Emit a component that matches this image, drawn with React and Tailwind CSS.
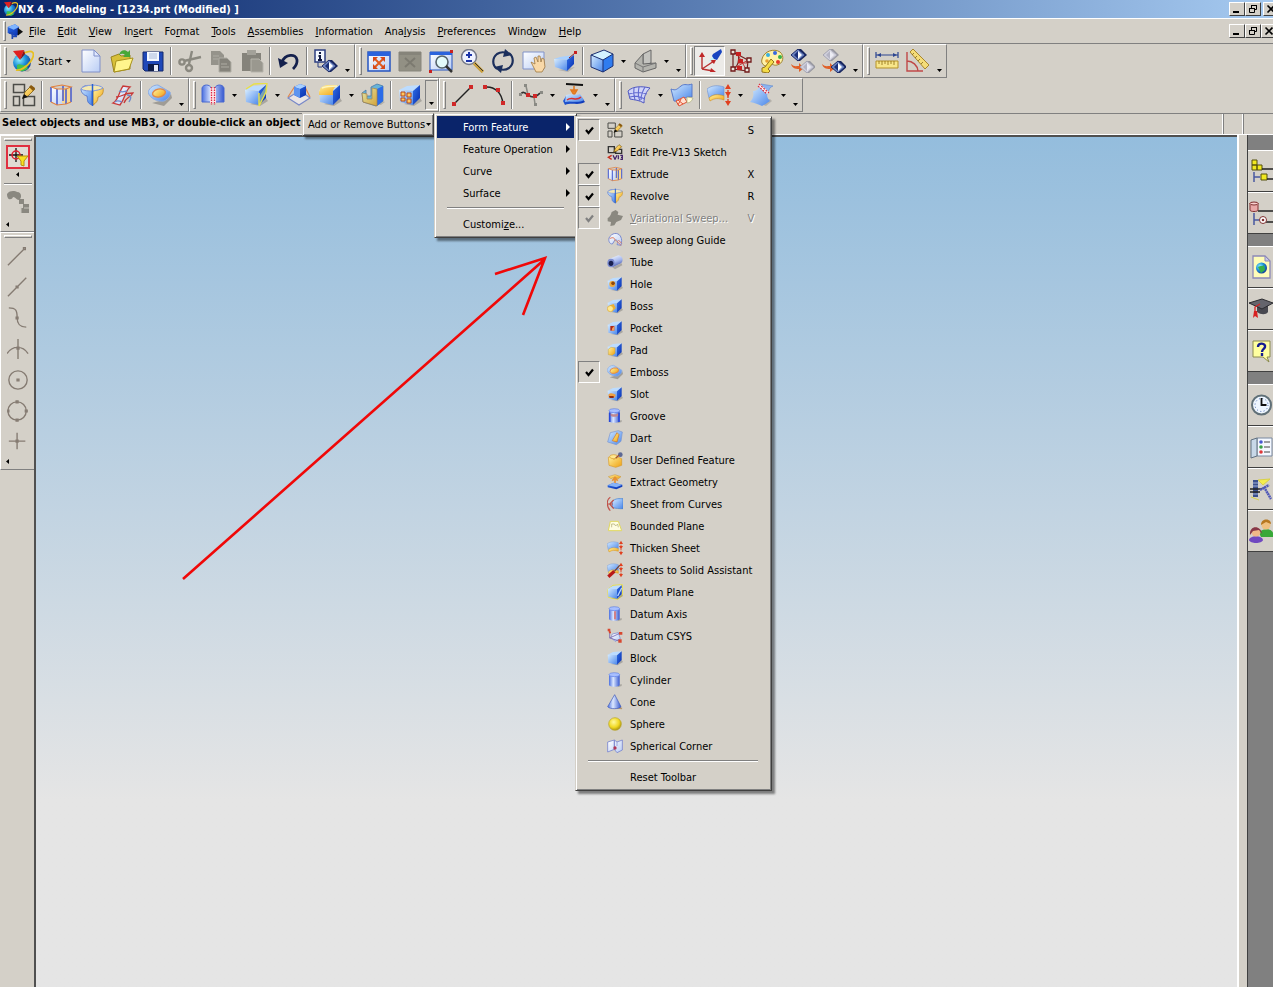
import clsx from "clsx";

const BLUE = "url(#blue)";
const DEEP = "url(#deep)";
const GOLD = "url(#gold)";
const PALE = "url(#pale)";

const Gradients = () => (
  <svg className="absolute size-0" aria-hidden="true">
    <defs>
      <linearGradient id="blue" x1="0" y1="0" x2="1" y2="1">
        <stop offset="0" stopColor="#d6ecff" />
        <stop offset="1" stopColor="#4a86ea" />
      </linearGradient>
      <linearGradient id="deep" x1="0" y1="0" x2="1" y2="1">
        <stop offset="0" stopColor="#2f6fe8" />
        <stop offset="1" stopColor="#0a2fae" />
      </linearGradient>
      <linearGradient id="gold" x1="0" y1="0" x2="1" y2="1">
        <stop offset="0" stopColor="#fff3a0" />
        <stop offset="1" stopColor="#f0a010" />
      </linearGradient>
      <linearGradient id="pale" x1="0" y1="0" x2="1" y2="1">
        <stop offset="0" stopColor="#ffffff" />
        <stop offset="1" stopColor="#b9cdf5" />
      </linearGradient>
      <linearGradient id="tube" x1="0" y1="0" x2="1" y2="0">
        <stop offset="0" stopColor="#4a6fe0" />
        <stop offset="0.4" stopColor="#dce8ff" />
        <stop offset="1" stopColor="#3558d0" />
      </linearGradient>
      <linearGradient id="pipe" x1="0.3" y1="0" x2="0.7" y2="1">
        <stop offset="0" stopColor="#eef4ff" />
        <stop offset="0.5" stopColor="#a4b6ee" />
        <stop offset="1" stopColor="#34459c" />
      </linearGradient>
      <radialGradient id="ball" cx="0.4" cy="0.35" r="0.7">
        <stop offset="0" stopColor="#fff9a0" />
        <stop offset="0.6" stopColor="#f0d820" />
        <stop offset="1" stopColor="#a08a10" />
      </radialGradient>
      <radialGradient id="globe" cx="0.35" cy="0.35" r="0.75">
        <stop offset="0" stopColor="#8ff0ff" />
        <stop offset="0.5" stopColor="#1c8fd8" />
        <stop offset="1" stopColor="#12308c" />
      </radialGradient>
      <pattern id="dither" width="2" height="2" patternUnits="userSpaceOnUse">
        <path d="M0 0h1v1H0zM1 1h1v1H1z" fill="#fff" />
      </pattern>
    </defs>
  </svg>
);

const CubeShape = ({ front = BLUE }) => (
  <>
    <path d="M6 21l10 2 8-5-2-3z" fill="#000" opacity=".2" />
    <path d="M1 7l8-4 13-1-7 6z" fill="#bcdcff" />
    <path d="M1 7l14 1v14L2 19z" fill={front} />
    <path d="M15 8l7-6v13l-7 7z" fill={DEEP} />
  </>
);

const CylinderShape = () => (
  <>
    <path d="M16 20l6-2v3l-6 2z" fill="#000" opacity=".2" />
    <path d="M3 4v15c0 4 16 4 16 0V4z" fill="url(#tube)" />
    <ellipse cx="11" cy="4" rx="8" ry="3" fill="#a8bfff" stroke="#4a6fe0" strokeWidth=".8" />
  </>
);

const SketchShape = () => (
  <>
    <g fill="none" stroke="#4c4c48" strokeWidth="1.500">
      <path d="M1.500 1.500h11v8h-11zM1.500 13.500h6v9h-6zM11.500 13.500h11v9h-11z" />
    </g>
    <path d="M11 15l2-6 6-6 4 3-7 7z" fill={GOLD} stroke="#7a5a10" strokeWidth=".8" />
    <path d="M10 16l2-5 4 3z" fill="#111" />
    <path d="M17 4l2-2 4 3-2 3z" fill="#8a5a10" />
  </>
);

const DiamondShape = ({ x, y, dark }) => (
  <g transform={`translate(${x} ${y})`}>
    <path d="M7 0h3l6 6-7 6H6z" fill={dark ? "#14235c" : "#96969e"} />
    <path d="M0 6l7-6 7 6-7 6z" fill={dark ? "#7088c4" : "#d0d0dc"} stroke={dark ? "#1c2a66" : "#a4a4b2"} />
    <path d="M7 2v8L3 6z" fill={dark ? "#1c3078" : "#b4b4c4"} />
    <path d="M7 2v8l4-4z" fill={dark ? "#fff" : "#ececf4"} />
  </g>
);

const RedArrow = () => <path d="M0 15c3 3 5 2 8 2v-3l5 5-5 4v-3c-4 0-7-1-8-5z" fill="#e06028" />;

const RulerShape = () => (
  <>
    <path d="M1 3v6M23 3v6M1 6h22" stroke="#2c4590" strokeWidth="1.200" />
    <path d="M2 6l4-2v4zM22 6l-4-2v4z" fill="#2c4590" />
    <path d="M1 12h22v7H1z" fill="#f8e68a" stroke="#b59228" />
    <path d="M4 12v3M7 12v4M10 12v3M13 12v4M16 12v3M19 12v4" stroke="#8a6a10" strokeWidth=".8" />
  </>
);

const ThickenShape = () => (
  <>
    <path d="M0 6c5-4 11-4 17-2v9C11 11 6 11 2 15z" fill={BLUE} stroke="#6c8fd0" strokeWidth=".6" />
    <path d="M2 15c4-4 9-4 15-2v4c-6-2-9-2-14 1z" fill={GOLD} stroke="#d09020" strokeWidth=".6" />
    <path d="M21 4v16" stroke="#e05030" strokeDasharray="2 1" strokeWidth="1.500" />
    <path d="M18 6l3-5 3 5zM18 18l3 5 3-5z" fill="#e04020" />
    <path d="M18 9h6l-3 5z" fill="#e04020" />
  </>
);

const LoftShape = () => (
  <>
    <path d="M8 20l8 3 6-5-2-2z" fill="#000" opacity=".15" />
    <path d="M3 8c3 0 6-2 6-5l9 7c-2 3 0 6 2 8-3 2-6 4-8 5-4-2-7-3-12-4 3-3 4-7 3-11z" fill={BLUE} />
    <path d="M11 1l12 2c-3 1-4 3-5 7z" fill="#8cb4f0" stroke="#5c88d0" strokeWidth=".6" />
    <path d="M9 2l9 8" stroke="#fff" strokeWidth="3" />
    <path d="M9 1l10 9M8 3l9 8" stroke="#d83040" strokeWidth="1.200" strokeDasharray="2 1" />
  </>
);

const icons = {
  nx: (
    <>
      <path d="M8 21l10 2 4-3z" fill="#000" opacity=".15" />
      <circle cx="12" cy="13.500" r="9" fill="url(#globe)" />
      <path d="M7 16c3-2 5 1 8 0l3 3c-3 4-8 4-11 1z" fill="#3fc050" />
      <path d="M14 4c9-4 12 0 7 8-4 6-11 10-15 9" fill="none" stroke="#e8c020" strokeWidth="1.800" />
      <path d="M3 2l11-1-4 10z" fill="#e02020" />
      <path d="M10 11l4-10 1 4z" fill="#8c1010" />
    </>
  ),
  part: (
    <>
      <path d="M1 6l11-4 6 4v11l-5 3-12-5z" fill={DEEP} />
      <path d="M1 6l11-4 6 4-8 4z" fill="#7fb4ff" />
      <path d="M16 7l8 6-8 6z" fill="#111" />
      <path d="M8 15v9M3 15h6M8 20h7" stroke="#2048b0" strokeWidth="2.500" />
    </>
  ),
  newFile: (
    <>
      <path d="M3 1h12l6 6v16H3z" fill={PALE} stroke="#8090c8" />
      <path d="M15 1v6h6z" fill="#dfe8ff" stroke="#8090c8" />
    </>
  ),
  open: (
    <>
      <path d="M1 8l8-3 2 2 9-1v14L4 23z" fill="#d8c038" stroke="#9a8420" />
      <path d="M6 12l17-3-4 11L4 23z" fill="#fff48c" stroke="#a8921c" />
      <path d="M9 6c1-5 6-6 9-3l2-2v7h-7l2-2c-2-2-4-1-6 0z" fill="#48a838" />
    </>
  ),
  save: (
    <>
      <path d="M2 3h20v19H4l-2-2z" fill="#1f48b8" stroke="#14286c" />
      <path d="M6 3h12v9H6z" fill="#f4f8ff" />
      <path d="M8 5h8M8 7h8M8 9h8" stroke="#a8b8d8" />
      <path d="M7 15h11v7H7z" fill="#0f1c48" />
      <path d="M13 16h4v6h-4z" fill="#e8ecf8" />
    </>
  ),
  cut: (
    <g fill="none" stroke="#8b8980" strokeWidth="2.400">
      <path d="M11 15L14 2M6 12l17-4" />
      <circle cx="4" cy="13" r="2.600" />
      <circle cx="11" cy="19" r="3" />
    </g>
  ),
  copy: (
    <>
      <path d="M2 2h9l4 4v10H2z" fill="#95938b" />
      <path d="M10 9h8l4 4v10H10z" fill="#85837b" stroke="#b0aea6" />
      <path d="M4 7h6M4 10h5M12 15h6M12 18h8" stroke="#aeaca4" />
    </>
  ),
  paste: (
    <>
      <path d="M2 4h19v18H2z" fill="#85837b" />
      <path d="M7 1h9v5H7z" fill="#a3a199" />
      <path d="M11 10h8l4 4v9H11z" fill="#9a988f" stroke="#b5b3ab" />
    </>
  ),
  undo: (
    <>
      <path d="M5 13C8 5 19 4 20 11c.5 4-2 7-4 9" fill="none" stroke="#14204c" strokeWidth="2.800" />
      <path d="M1 9l2 10 8-5z" fill="#14204c" />
    </>
  ),
  info: (
    <>
      <path d="M1 1h10v12H1z" fill="#f4f8ff" stroke="#2c3e80" strokeWidth="1.500" />
      <path d="M6 3v2M6 6v5M4 11h4M4.500 7H6" stroke="#101840" strokeWidth="2" />
      <DiamondShape x="8" y="11" dark />
      <path d="M4 13v5h4" fill="none" stroke="#2c3e80" />
    </>
  ),
  fit: (
    <>
      <path d="M1 3h22v19H1z" fill={PALE} stroke="#2654c0" strokeWidth="1.500" />
      <path d="M1 3h22v4H1z" fill="#2b63dc" />
      <path d="M8 10l8 8M16 10l-8 8" stroke="#e05a20" strokeWidth="2" />
      <path d="M6 8h5l-5 5zM18 8h-5l5 5zM6 20v-5l5 5zM18 20v-5l-5 5z" fill="#d84818" />
    </>
  ),
  fitOff: (
    <>
      <path d="M1 3h22v19H1z" fill="#929084" stroke="#88867c" />
      <path d="M1 3h22v3H1z" fill="#86847a" />
      <path d="M7 9l10 9M17 9L7 18" stroke="#7c7a70" strokeWidth="2" />
    </>
  ),
  zoomBox: (
    <>
      <path d="M1 3h22v18H1z" fill={PALE} stroke="#2654c0" />
      <path d="M1 3h22v3H1z" fill="#2b63dc" />
      <circle cx="13" cy="13" r="6" fill="#e4fbfb" stroke="#56646c" strokeWidth="1.600" />
      <path d="M17 17l6 6" stroke="#333" strokeWidth="2.500" />
      <path d="M0 21h3v3H0zM21 1h3v3h-3z" fill="#c82020" />
    </>
  ),
  zoomInOut: (
    <>
      <circle cx="9" cy="8" r="7.500" fill="#eef2ff" stroke="#747888" strokeWidth="1.500" />
      <path d="M9 3v6M6 6h6M6 12h6" stroke="#1c34a8" strokeWidth="2" />
      <path d="M14 14l9 9" stroke="#c9a040" strokeWidth="3.500" />
      <path d="M15 14l8 8" stroke="#333" />
    </>
  ),
  rotate: (
    <>
      <path d="M6 20C1 16 1 9 6 5c3-2 7-2 10-1M18 4c5 4 5 11 0 15-3 2-7 2-10 1" fill="none" stroke="#1c2f5c" strokeWidth="2.200" />
      <path d="M14 0l7 6-9 2zM10 24l-7-6 9-2z" fill="#1c2f5c" />
    </>
  ),
  pan: (
    <>
      <path d="M1 3h21v17H1z" fill={PALE} stroke="#8092c8" />
      <path d="M9 13l4 2-1-6 2-1 2 5v-6h2l1 6 1-4 2 1 1 8-3 5h-6z" fill="#f8d8a8" stroke="#a07840" strokeWidth=".8" />
    </>
  ),
  perspective: (
    <>
      <path d="M5 21l10 2 7-5z" fill="#000" opacity=".15" />
      <path d="M1 10l6-2 14-2-5 5z" fill="#a8d0ff" />
      <path d="M1 10l13 1v11L2 18z" fill={BLUE} />
      <path d="M14 11l7-5v9l-7 7z" fill={DEEP} />
      <path d="M16 9l6-5" stroke="#902020" />
      <path d="M21 2h3v3h-3z" fill="#c82020" />
    </>
  ),
  shaded: (
    <>
      <path d="M1 6l13-5 9 4-10 6z" fill="#d4f2ff" />
      <path d="M1 6l12 5v12L1 18z" fill={BLUE} />
      <path d="M13 11l10-6v12l-10 6z" fill="#2f7cf0" />
      <path d="M1 6l13-5 9 4v12l-10 6-12-5zM1 6l12 5 10-6M13 11v12" fill="none" stroke="#1c2f70" />
    </>
  ),
  wire: (
    <>
      <path d="M10 5l8-4v13l-8 2z" fill="#c4c4c0" stroke="#666" />
      <path d="M2 14l8-9v10l13-1v5l-13 4-8-4z" fill="#b4b4ae" stroke="#666" />
      <path d="M2 14l8 4v5M10 18l13-4" fill="none" stroke="#777" />
    </>
  ),
  wcs: (
    <>
      <path d="M4 6v14M4 20l12-8M4 20l11 2" stroke="#b83030" strokeWidth="1.400" />
      <path d="M4 3l3 5H1zM18 11l-6 0 4 4zM18 23l-5-4-1 4z" fill="#c02828" />
      <path d="M10 13l7-8 3 3z" fill="#c0f4ff" />
      <path d="M15 5l8-5 1 3-5 8-3-1-2-3z" fill="#1844c0" />
    </>
  ),
  wcsEdit: (
    <>
      <path d="M4 3v17l14 2M4 3l15 8-1 11M4 20C9 18 11 10 9 5" fill="none" stroke="#702020" strokeWidth="1.200" />
      <path d="M4 20l15-9M9 6l9 16M9 14h10" stroke="#c03030" strokeWidth=".9" />
      <g fill="#e8e4dc" stroke="#701818" strokeWidth="1.300">
        <path d="M2 1h4v4H2zM2 18h4v4H2zM18 9h4v4h-4zM16 19h4v4h-4z" />
      </g>
      <path d="M7 3h5v4H7zM9 10h5v4H9zM8 17h5v4H8z" fill="#c82020" />
    </>
  ),
  palette: (
    <>
      <path d="M2 10C4 2 14-1 20 3c5 4 3 12-3 13-4 1-4-2-7 0-3 3-10 0-8-6z" fill="#fff2a8" stroke="#a08430" />
      <circle cx="8" cy="6" r="2" fill="#38b0e0" />
      <circle cx="15" cy="4" r="2" fill="#3868e0" />
      <circle cx="20" cy="8" r="2" fill="#38b048" />
      <circle cx="18" cy="13" r="2" fill="#e83828" />
      <circle cx="7" cy="12" r="1.800" fill="#e8a030" />
      <path d="M2 19l3-1 6-8 3 3-6 7 2 2-2 2-6-1z" fill="#f4dc48" stroke="#94741c" />
    </>
  ),
  blankA: (
    <>
      <RedArrow />
      <DiamondShape x="0" y="0" dark />
      <DiamondShape x="9" y="12" />
    </>
  ),
  blankB: (
    <>
      <RedArrow />
      <DiamondShape x="1" y="0" />
      <DiamondShape x="9" y="12" dark />
    </>
  ),
  ruler: <RulerShape />,
  angle: (
    <>
      <path d="M1 3v19h16M1 12a11 11 0 0 1 11 10" fill="none" stroke="#c04848" strokeWidth="1.400" />
      <path d="M4 3l3-3 16 16-4 4z" fill="#f4dc78" stroke="#a8862c" />
      <path d="M8 4l-2 2M11 7L9 9M14 10l-2 2M17 13l-2 2" stroke="#80641c" strokeWidth=".8" />
    </>
  ),
  sketch: <SketchShape />,
  preSketch: (
    <>
      <path d="M2 4h9v9H2zM13 8h9v6h-9z" fill="none" stroke="#333" strokeWidth="2" />
      <path d="M10 12l3-6 5-5 4 3-6 6z" fill={GOLD} stroke="#7a5a10" />
      <path d="M7 17l-5 3 5 3" fill="none" stroke="#c83020" strokeWidth="2" />
      <path d="M9 17l3 6 3-6M17 17v6M20 17h3v3h-2 2v3h-3" fill="none" stroke="#402068" strokeWidth="1.800" />
    </>
  ),
  extrude: (
    <>
      <path d="M2 4l6 2v16l-6-3zM8 6h8v14l-8 2z" fill={PALE} />
      <path d="M13 5h9v15l-9 0z" fill="#f8d890" />
      <path d="M2 4v15M8 6v16M14 3v15M17 6v15M22 4v15" fill="none" stroke="#4c60d0" strokeWidth="1.600" />
      <path d="M2 4l11-2 9 2-5 2H8zM2 19l6 3 9-1 5-2" fill="none" stroke="#e08040" strokeWidth="1.200" />
    </>
  ),
  revolve: (
    <>
      <path d="M1 6c2-4 8-4 11-3v19c-6-2-4-6-5-9-4-1-6-4-6-7z" fill={BLUE} stroke="#4a6cc8" strokeWidth=".8" />
      <path d="M13 8c4-1 8-2 10-3 1 5-1 8-5 9 0 4-2 6-5 8z" fill={GOLD} stroke="#c08820" strokeWidth=".8" />
      <path d="M1 6c3-5 19-5 22-1-3 2-6 2-10 3-4 0-9 0-12-2z" fill="#f4e8b0" stroke="#8098e0" />
      <path d="M12.500 1v22" stroke="#2860d0" strokeWidth="1.500" />
    </>
  ),
  varSweep: (
    <g fill="none" strokeWidth="1.300">
      <path d="M2 20c6-3 6-12 10-17l7 1c-5 4-4 10-10 18z" fill={PALE} stroke="#c83838" />
      <path d="M5 14c7 0 7-4 17-4-3 5-7 4-9 10" stroke="#c83838" />
      <path d="M8 8c4 2 6 0 8 0M4 19c2-2 5-1 7 0" stroke="#7088c8" />
      <path d="M16 12c4 0 5 2 2 7" stroke="#7088c8" />
    </g>
  ),
  emboss: (
    <>
      <path d="M4 20l12 3 8-8-1-4-8 6z" fill="#000" opacity=".25" />
      <path d="M0 9c2-5 6-7 10-7l12 7c1 2-1 7-6 9-6 1-14-2-16-9z" fill={BLUE} stroke="#8cabe0" />
      <ellipse cx="11" cy="10" rx="6.500" ry="4" fill={GOLD} stroke="#e08848" strokeWidth="1.300" transform="rotate(-12 11 10)" />
    </>
  ),
  feature: (
    <>
      <path d="M1 19V5c1-4 8-4 9 0v14zM14 19V5c1-4 8-4 9 0v14z" fill="url(#tube)" stroke="#4868d0" />
      <path d="M9 5h6v15H9z" fill="#fbe4e8" />
      <path d="M10.500 4v18M13.500 4v18" stroke="#e02848" strokeWidth="1.300" strokeDasharray="1.500 1" />
    </>
  ),
  draft: (
    <>
      <CubeShape />
      <path d="M23 1v7l-8 15V14z" fill="#b8d8a0" opacity=".6" />
      <path d="M2 6l8-5 13-1-1 9-7 14V10" fill="none" stroke="#e8e048" strokeWidth="1.400" />
    </>
  ),
  offset: (
    <>
      <path d="M1 15l6-4 12 1 4 3-11 7z" fill="#e8e4e4" stroke="#7888c8" strokeWidth="1.200" />
      <path d="M1 14L8 3M23 14L18 4" stroke="#e08850" strokeWidth="1.200" />
      <path d="M7 4l6-3 6 2v9l-6 3-6-3z" fill={DEEP} />
      <path d="M7 4l6-3 6 2-6 3z" fill="#a8d0ff" />
      <path d="M7 4l6 2v9l-6-3z" fill="#5c94f0" />
    </>
  ),
  blend: (
    <>
      <CubeShape />
      <path d="M1 12V9c1-5 5-7 9-7h11c-4 1-7 4-6 10z" fill={GOLD} />
      <path d="M4 5c5-2 11-2 15-2" stroke="#fff6c0" strokeWidth="1.500" fill="none" />
    </>
  ),
  trim: (
    <>
      <path d="M10 22h10l4-3-4-2z" fill="#000" opacity=".15" />
      <path d="M1 10l4-3v6h5V4l6-3 6 2v15l-7 5-13-4z" fill="#68b4d8" stroke="#4878a8" strokeWidth=".8" />
      <path d="M16 6l6-3v15l-6 5z" fill="#2c6ce8" />
      <path d="M1 10l5 1v5h5V5l5 1v17L2 19z" fill={GOLD} opacity=".8" stroke="#b88030" strokeWidth=".8" />
    </>
  ),
  instance: (
    <>
      <CubeShape />
      <path d="M3 9h4v4H3zM9 10h4v4H9zM3 15h4v3H3zM9 16h4v4H9z" fill="#ffc860" stroke="#b84818" />
    </>
  ),
  line: (
    <>
      <path d="M3 21L20 4" stroke="#222" strokeWidth="1.500" />
      <path d="M1 19h4v4H1zM18 2h4v4h-4z" fill="#d02828" />
    </>
  ),
  arc: (
    <>
      <path d="M3 4c10-1 17 6 18 17" fill="none" stroke="#222" strokeWidth="1.500" />
      <path d="M1 2h4v4H1zM14 5h4v4h-4zM19 18h4v4h-4z" fill="#d02828" />
    </>
  ),
  spline: (
    <>
      <path d="M2 11C4 8 6 10 9 12s7 4 12-2" fill="none" stroke="#333" strokeWidth="1.700" />
      <path d="M9 12L7 3M15 14l1 7" fill="none" stroke="#8a8a84" strokeWidth="1.500" />
      <path d="M7 10h4v4H7zM14 11h4v4h-4z" fill="#d02828" />
      <path d="M5 1h3v3H5zM15 20h3v3h-3zM21 8h3v3h-3zM0 10h3v3H0z" fill="#8a8a84" />
    </>
  ),
  project: (
    <>
      <path d="M4 1l17 1" stroke="#111" strokeWidth="2" />
      <path d="M12 3v6M9 7h6l-3 5z" fill="#f09030" stroke="#e07820" strokeWidth="1.500" />
      <path d="M4 13c6-2 9 1 14-1l5 7c-7 4-13 0-20 3l-2-4z" fill={DEEP} />
      <path d="M4 12c6-2 9 1 14-1l4 6c-7 4-13 0-19 2z" fill={BLUE} />
      <path d="M5 17c5-4 9 2 14-3" fill="none" stroke="#d83030" strokeWidth="1.500" />
    </>
  ),
  mesh: (
    <>
      <path d="M1 8c5-5 14-5 22-3-4 4-6 8-6 15-5-3-9-3-14-4z" fill="#d0d4f8" stroke="#5058c0" />
      <path d="M2 11c6-2 12-2 18 0M3 14c6-2 10 0 15 2M7 5c-1 5 0 8 1 12M12 4c-1 5-1 10 1 14M18 4c-3 5-4 9-4 13" fill="none" stroke="#6068d0" strokeWidth="1.100" />
    </>
  ),
  section: (
    <>
      <path d="M1 6c5 2 6 0 10-3s6 0 11-2v13c-5-1-7 1-10 3s-5 1-8 1z" fill={BLUE} stroke="#5878c8" />
      <path d="M6 18l8-4 3 5-8 4z" fill="#ffe0d0" stroke="#e05030" />
      <path d="M8 17l5 4M11 16l-3 6" stroke="#e05030" />
      <path d="M17 20c3 0 5-2 6-5l-6-1z" fill="#fffcd8" stroke="#a8a880" strokeWidth=".7" />
    </>
  ),
  thicken: <ThickenShape />,
  loft: <LoftShape />,
  varSweepOff: <path d="M1 12c3-1 5-5 6-9l6-3 4 3-1 4 8 2-3 6-7 3-3 5-6 1 1-6-5-1z" fill="#8a8880" />,
  sweepGuide: (
    <g fill="none" strokeWidth="1.500">
      <path d="M3 9C7 1 16 0 20 6c3 5 2 9 1 14l-6-1c2-5 0-8-3-7l-4 6c-4 0-6-4-5-9z" fill={PALE} stroke="#7c8cd0" />
      <path d="M4 10c5-3 8-1 8 3" stroke="#e07858" />
      <path d="M14 13l7 7M17 12l5 5" stroke="#e07858" />
    </g>
  ),
  tube: (
    <>
      <path d="M8 20l4 3 11-6-1-3z" fill="#000" opacity=".2" />
      <path d="M4 7L17 2c7 0 8 9 4 12L8 20z" fill="url(#pipe)" />
      <ellipse cx="6" cy="13.500" rx="5.500" ry="6.500" fill="#7c8cd0" />
      <ellipse cx="6" cy="14" rx="3.500" ry="4" fill="#182050" />
    </>
  ),
  hole: (
    <>
      <CubeShape />
      <circle cx="8" cy="12" r="4.500" fill="#f0a838" />
      <circle cx="9" cy="11" r="2.700" fill="#8c4810" />
    </>
  ),
  boss: (
    <>
      <CubeShape />
      <path d="M4 11l6-2 3 6-6 6z" fill="#f0b030" />
      <circle cx="5" cy="16" r="4.500" fill="#ffe890" stroke="#d8a838" />
    </>
  ),
  pocket: (
    <>
      <CubeShape />
      <path d="M5 9h6v7H5z" fill="#b02818" />
      <path d="M8 12l3-3v7H7z" fill="#f0a060" />
    </>
  ),
  pad: (
    <>
      <CubeShape />
      <path d="M2 11l4-3 6 1v8l-4 3-6-1z" fill={GOLD} stroke="#d0a030" strokeWidth=".7" />
    </>
  ),
  slot: (
    <>
      <CubeShape />
      <path d="M2 13c4-4 8-1 11 0l-1 4-9 1z" fill="#f0a040" />
      <path d="M3 15h7v3H4z" fill="#902c10" />
    </>
  ),
  groove: (
    <>
      <CylinderShape />
      <path d="M4 7c4 3 10 3 14 0v4c-4 3-10 3-14 0z" fill="#c08890" />
      <path d="M4 7v14M18 7v14" stroke="#2848d8" strokeWidth="2.500" />
    </>
  ),
  dart: (
    <>
      <path d="M1 18l4-14 12-3 6 2-2 14-7 5z" fill={BLUE} stroke="#7894d0" />
      <path d="M8 16l7-12 3 3-3 11z" fill={GOLD} stroke="#d07020" />
    </>
  ),
  userFeature: (
    <>
      <path d="M2 8l8-2v5l7-3 5 2v10l-9 3-10-3z" fill={GOLD} stroke="#d89828" />
      <ellipse cx="10" cy="7" rx="6" ry="3" fill="#ffe890" stroke="#d89828" />
      <circle cx="20" cy="4" r="3.500" fill="#5c6894" />
      <path d="M13 9l5-4" stroke="#a05030" strokeWidth="2" />
    </>
  ),
  extract: (
    <>
      <path d="M2 4l10-3 9 3-4 3c-4-2-8-2-11 0z" fill={GOLD} stroke="#c89838" strokeWidth=".8" />
      <path d="M12 6v9M8 10l4-5 4 5" fill="none" stroke="#e89030" strokeWidth="2.500" />
      <path d="M1 17l9-4 13 3v3l-9 4-13-3z" fill={DEEP} />
      <path d="M1 17l9-4 13 3-9 4z" fill="#88b4f8" />
    </>
  ),
  sheetCurves: (
    <>
      <path d="M8 8c5-5 11-4 16-4v15c-6 0-11 0-16-2z" fill="url(#blue)" stroke="#3878d0" />
      <path d="M5 2C-2 6 0 17 5 22M10 6L4 12l6 7M1 12h8" fill="none" stroke="#c05048" strokeWidth="1.800" />
    </>
  ),
  bounded: (
    <>
      <path d="M2 19L5 5h12l5 14z" fill="#fffde0" stroke="#e0d860" strokeWidth="1.500" />
      <path d="M7 14V9h4l2 3 3-3 1 5" fill="none" stroke="#aaa66c" />
    </>
  ),
  sheetsToSolid: (
    <>
      <ThickenShape />
      <path d="M2 22l9-8" stroke="#b81818" strokeWidth="5" />
      <path d="M11 14l8-9" stroke="#704038" strokeWidth="2" />
    </>
  ),
  datumPlane: (
    <>
      <path d="M1 8l8-6 14-1v16l-7 6-14-3z" fill="none" stroke="#e8e048" strokeWidth="1.500" />
      <CubeShape />
      <path d="M16 18l6-12" stroke="#b8d8ff" strokeWidth="2" />
    </>
  ),
  datumAxis: (
    <>
      <CylinderShape />
      <path d="M12 8v12" stroke="#d08088" strokeWidth="3" />
    </>
  ),
  datumCsys: (
    <>
      <path d="M8 9l9-2 3 9-8 4-6-6z" fill={PALE} stroke="#6c80d0" />
      <path d="M4 3v12l16 5M4 15L19 8" fill="none" stroke="#7c6cb0" strokeWidth="1.300" />
      <path d="M1 1h4v4H1zM18 6h5v4h-5zM17 17h5v5h-5zM2 2l4 4v2H3z" fill="#d84830" />
    </>
  ),
  block: <CubeShape />,
  cylinder: <CylinderShape />,
  cone: (
    <>
      <path d="M8 21l14 2 1-2-6-3z" fill="#a07030" opacity=".6" />
      <path d="M11.500 1L1 19c3 4 17 4 20 0z" fill="url(#tube)" stroke="#3c58b8" />
    </>
  ),
  sphere: <circle cx="12" cy="12" r="9.500" fill="url(#ball)" stroke="#b8a428" />,
  spherical: (
    <>
      <path d="M1 6l10-3v14l-10 4zM11 3l4 3 8-3v15l-8 4-4-5z" fill={PALE} stroke="#7c88d0" strokeWidth="1.300" />
      <path d="M15 6v6" stroke="#7c88d0" />
      <circle cx="12" cy="15" r="2.500" fill="#b03858" />
    </>
  ),
};

const Icon = ({ name, className = "size-6" }) => (
  <svg viewBox="0 0 24 24" className={clsx("shrink-0", className)} aria-hidden="true">
    {icons[name]}
  </svg>
);

// "&" marks the letter that is used as access key
const AccessLabel = ({ text }) => {
  const at = text.indexOf("&");
  if (at < 0) return <span>{text}</span>;
  return (
    <span>
      {text.slice(0, at)}
      <u className="underline-offset-1">{text[at + 1]}</u>
      {text.slice(at + 2)}
    </span>
  );
};

const DownCaret = () => (
  <svg viewBox="0 0 5 3" className="h-[3px] w-[5px] shrink-0" aria-hidden="true">
    <path d="M0 0h5L2.500 3z" />
  </svg>
);

const LeftCaret = () => (
  <svg viewBox="0 0 3 5" className="h-[5px] w-[3px]" aria-hidden="true">
    <path d="M3 0v5L0 2.500z" />
  </svg>
);

const ToolButton = ({ name, pressed }) => (
  <button
    type="button"
    aria-label={name}
    className={clsx(
      "flex h-[30px] w-[31px] shrink-0 items-center justify-center",
      pressed && "border border-t-[#808080] border-l-[#808080] border-r-white border-b-white bg-[#ecebe8]"
    )}
  >
    <Icon name={name} />
  </button>
);

const Separator = () => (
  <div className="mx-[2px] h-7 w-[2px] shrink-0 border-l border-[#808080] border-r border-r-white" />
);

const Overflow = ({ pressed }) => (
  <button
    type="button"
    aria-label="Toolbar options"
    className={clsx(
      "flex h-[30px] w-[13px] shrink-0 items-end justify-center pb-1",
      pressed && "border border-t-[#808080] border-l-[#808080] border-r-white border-b-white"
    )}
  >
    <DownCaret />
  </button>
);

const ToolGroup = ({ items, children }) => (
  <div className="flex h-[34px] shrink-0 items-center border-t border-r border-b border-l border-t-white border-r-[#808080] border-b-[#808080] border-l-white">
    <div className="mr-px ml-[3px] h-7 w-[3px] border border-t-white border-r-[#808080] border-b-[#808080] border-l-white" />
    {children}
    {items.map((item, i) => {
      if (item === "|") return <Separator key={i} />;
      if (item === "v")
        return (
          <button key={i} type="button" aria-label="More" className="flex h-[30px] w-3 items-center justify-center">
            <DownCaret />
          </button>
        );
      if (item === "more") return <Overflow key={i} />;
      if (item === "more!") return <Overflow key={i} pressed />;
      if (item.endsWith("!")) return <ToolButton key={i} name={item.slice(0, -1)} pressed />;
      return <ToolButton key={i} name={item} />;
    })}
  </div>
);

const WindowButtons = ({ gap }) => (
  <div className={clsx("flex shrink-0", gap ? "-mr-[6px]" : "-mr-1")}>
    {["Minimize", "Restore", "Close"].map((label) => (
      <button
        key={label}
        type="button"
        aria-label={label}
        className={clsx(
          "flex h-[14px] w-4 items-center justify-center border border-t-white border-l-white border-r-[#404040] border-b-[#404040] bg-[#d4d0c8]",
          gap && label === "Close" && "ml-[2px]"
        )}
      >
        <svg viewBox="0 0 10 10" className="size-[10px]" fill="none" stroke="#000" aria-hidden="true">
          {label === "Minimize" && <path d="M1 8h6" strokeWidth="2" />}
          {label === "Restore" && <path d="M3.500 4V1.500h5v4H6M3 1.500h6M1.500 4.500h5v4h-5zM1 4.500h6" />}
          {label === "Close" && <path d="M1.500 1.500l7 7M8.500 1.500l-7 7" strokeWidth="1.600" />}
        </svg>
      </button>
    ))}
  </div>
);

const MENUS = [
  "&File",
  "&Edit",
  "&View",
  "In&sert",
  "Fo&rmat",
  "&Tools",
  "&Assemblies",
  "&Information",
  "Ana&lysis",
  "&Preferences",
  "Wind&ow",
  "&Help",
];

const STANDARD = ["newFile", "open", "save", "|", "cut", "copy", "paste", "|", "undo", "|", "info", "more"];
const VIEW = [
  "fit", "fitOff", "zoomBox", "zoomInOut", "rotate", "pan", "perspective", "|",
  "shaded", "v", "wire", "v", "more",
];
const UTILITY = ["wcs!", "wcsEdit", "palette", "blankA", "blankB", "more"];
const FORM_FEATURE = ["sketch", "|", "extrude", "revolve", "varSweep", "|", "emboss", "more"];
const OPERATION = ["feature", "v", "draft", "v", "offset", "blend", "v", "trim", "|", "instance", "more!"];
const CURVE = ["line", "arc", "|", "spline", "v", "project", "v", "more"];
const SURFACE = ["mesh", "v", "section", "|", "thicken", "v", "loft", "v", "more"];

const SNAP_POINTS = [
  { name: "End point", art: <path d="M1 22L19 4M18 3h2v2h-2z" /> },
  { name: "Mid point", art: <path d="M1 22L21 2M10 11h2v2h-2z" /> },
  { name: "Control point", art: <path d="M2 1c8 0 9 3 9 10s2 11 10 11M10 11h2v2h-2z" /> },
  { name: "Intersection", art: <path d="M0 17c6-9 17-9 23 0M12 1v22M11 10h2v2h-2z" /> },
  { name: "Arc center", art: <><circle cx="12" cy="12" r="10" /><path d="M11 11h2v2h-2z" /></> },
  { name: "Quadrant point", art: <><circle cx="11" cy="12" r="10" /><path d="M10 1h2v2h-2zM10 21h2v2h-2zM1 11h1v2H1zM20 11h2v2h-2z" /></> },
  { name: "Existing point", art: <path d="M2 11h18M11 2v18M10 10h2v2h-2z" /> },
];

const FEATURES = [
  { label: "Sketch", icon: "sketch", hotkey: "S", checked: true },
  { label: "Edit Pre-V13 Sketch", icon: "preSketch" },
  { label: "Extrude", icon: "extrude", hotkey: "X", checked: true },
  { label: "Revolve", icon: "revolve", hotkey: "R", checked: true },
  { label: "&Variational Sweep...", icon: "varSweepOff", hotkey: "V", checked: true, disabled: true },
  { label: "Sweep along Guide", icon: "sweepGuide" },
  { label: "Tube", icon: "tube" },
  { label: "Hole", icon: "hole" },
  { label: "Boss", icon: "boss" },
  { label: "Pocket", icon: "pocket" },
  { label: "Pad", icon: "pad" },
  { label: "Emboss", icon: "emboss", checked: true },
  { label: "Slot", icon: "slot" },
  { label: "Groove", icon: "groove" },
  { label: "Dart", icon: "dart" },
  { label: "User Defined Feature", icon: "userFeature" },
  { label: "Extract Geometry", icon: "extract" },
  { label: "Sheet from Curves", icon: "sheetCurves" },
  { label: "Bounded Plane", icon: "bounded" },
  { label: "Thicken Sheet", icon: "thicken" },
  { label: "Sheets to Solid Assistant", icon: "sheetsToSolid" },
  { label: "Datum Plane", icon: "datumPlane" },
  { label: "Datum Axis", icon: "datumAxis" },
  { label: "Datum CSYS", icon: "datumCsys" },
  { label: "Block", icon: "block" },
  { label: "Cylinder", icon: "cylinder" },
  { label: "Cone", icon: "cone" },
  { label: "Sphere", icon: "sphere" },
  { label: "Spherical Corner", icon: "spherical" },
];

const RESOURCES = [
  [
    {
      name: "Assembly Navigator",
      art: (
        <>
          <path d="M3 1h5v5H3zM3 6h5v5H3zM8 6h5v5H8zM12 15h6v6h-6z" fill="#f0e820" stroke="#55500c" />
          <path d="M13 10h11M18 20h6" stroke="#222" strokeWidth="1.500" />
          <path d="M5 13v10M5 18h6" stroke="#4858a0" strokeWidth="1.500" fill="none" />
        </>
      ),
    },
    {
      name: "Part Navigator",
      art: (
        <>
          <path d="M1 2v7c0 2 8 2 8 0V2z" fill="#e8a8a8" stroke="#803030" />
          <ellipse cx="5" cy="2.500" rx="4" ry="1.500" fill="#f8d0d0" stroke="#803030" />
          <path d="M9 10h15M17 21h7" stroke="#222" strokeWidth="1.500" />
          <path d="M5 12v12M5 19h5" stroke="#4858a0" strokeWidth="1.500" />
          <circle cx="14" cy="19" r="3.500" fill="#fff" stroke="#803030" />
          <circle cx="14" cy="19" r="1.300" fill="#803030" />
        </>
      ),
    },
  ],
  [
    {
      name: "Internet Explorer",
      art: (
        <>
          <path d="M4 1h12l5 5v17H4z" fill="#fffcb8" stroke="#8c88b8" strokeWidth="1.300" />
          <path d="M16 1v5h5z" fill="#c8c8e8" stroke="#8c88b8" />
          <circle cx="12.500" cy="13" r="5.500" fill="url(#globe)" />
          <path d="M9 12c3-2 4 0 6-2l1 5-4 3z" fill="#38b048" />
        </>
      ),
    },
    {
      name: "Training",
      art: (
        <>
          <path d="M8 8v7c4 3 9 3 11 0V8z" fill="#484850" />
          <path d="M0 6l13-4 11 4-11 6z" fill="#64646c" stroke="#2c2c30" />
          <path d="M11 7l-5 3v6" fill="none" stroke="#d82020" strokeWidth="1.300" />
          <path d="M5 14h3l1 7-3-2-2 2z" fill="#d82020" />
        </>
      ),
    },
    {
      name: "Help",
      art: (
        <>
          <path d="M4 2h17v16h-3l2 5-6-5H4z" fill="#ffffa0" stroke="#8a8a50" />
          <path d="M9 8c0-5 8-4 7 0-.5 2-3 2-3 5M13 14v3" fill="none" stroke="#141c90" strokeWidth="2.400" />
        </>
      ),
    },
  ],
  [
    {
      name: "History",
      art: (
        <>
          <circle cx="12.500" cy="12" r="9.500" fill="#eef6ff" stroke="#607078" strokeWidth="2" />
          <circle cx="12.500" cy="12" r="6.500" fill="none" stroke="#4868b0" strokeDasharray="1 2.400" />
          <path d="M12.500 5v7h5" fill="none" stroke="#111" strokeWidth="1.800" />
        </>
      ),
    },
    {
      name: "System Materials",
      art: (
        <>
          <path d="M8 3h15v18H8z" fill="#f4f8ff" stroke="#7888a0" />
          <path d="M2 5l6-2v18l-6 2z" fill="#c8d8e8" stroke="#607080" />
          <path d="M15 7h6M15 12h6M15 17h6" stroke="#444" />
          <circle cx="12" cy="7" r="1.800" fill="#4858d0" />
          <circle cx="12" cy="12" r="1.800" fill="#38a048" />
          <circle cx="12" cy="17" r="1.800" fill="#e03838" />
        </>
      ),
    },
    {
      name: "Process Studio",
      art: (
        <>
          <path d="M9 3l12-1-7 6zM2 20l8 3" fill="#f4ec50" stroke="#d8d048" />
          <path d="M4 3h5v17H4z" fill="#3c508c" />
          <path d="M4 6h5M4 9h5M4 17h5" stroke="#a0b0d8" />
          <path d="M1 12h12M1 15h10" stroke="#222" strokeWidth="1.500" />
          <path d="M11 13l9-5M15 10l7 12" stroke="#5058b8" strokeWidth="2.500" strokeDasharray="2 .5" />
        </>
      ),
    },
    {
      name: "Roles",
      art: (
        <>
          <path d="M10 14c2-5 13-5 14 0v4H12z" fill="#38a838" />
          <circle cx="17" cy="6" r="4.500" fill="#f0c080" />
          <path d="M12 6c0-7 10-7 10-1l-5-2z" fill="#b87820" />
          <path d="M0 21c1-5 13-5 14 0-1 4-13 4-14 0z" fill="#7048c0" />
          <circle cx="7" cy="13" r="4.500" fill="#f0b888" />
          <path d="M1 16c-1-10 11-10 12-1l-3-4-6 1z" fill="#883848" />
        </>
      ),
    },
  ],
];

const popup =
  "absolute border border-t-[#d4d0c8] border-l-[#d4d0c8] border-r-[#404040] border-b-[#404040] bg-[#d4d0c8] shadow-[inset_1px_1px_0_#fff,inset_-1px_-1px_0_#808080,3px_3px_2px_rgba(0,0,0,0.45)]";

const MenuRule = ({ className }) => (
  <div className={clsx("mt-[3px] mb-1 border-t border-b border-t-[#808080] border-b-white", className)} />
);

const ToolbarMenu = () => (
  <div role="menu" className={clsx(popup, "top-[113px] left-[434px] w-[143px] p-[2px]")}>
    {["Form Feature", "Feature Operation", "Curve", "Surface"].map((label, i) => (
      <button
        key={label}
        type="button"
        role="menuitem"
        className={clsx(
          "flex h-[22px] w-full items-center justify-between pr-1 pl-[26px]",
          i === 0 && "bg-[#0a246a] text-white"
        )}
      >
        <span>{label}</span>
        <svg viewBox="0 0 4 8" className="h-2 w-1" fill="currentColor" aria-hidden="true">
          <path d="M0 0l4 4-4 4z" />
        </svg>
      </button>
    ))}
    <MenuRule className="mr-[10px] ml-[10px]" />
    <button type="button" role="menuitem" className="flex h-[22px] w-full items-center pl-[26px]">
      <AccessLabel text="Customi&ze..." />
    </button>
  </div>
);

const FeatureMenu = () => (
  <div role="menu" className={clsx(popup, "top-[116px] left-[575px] w-[197px] p-[2px]")}>
    {FEATURES.map(({ label, icon, hotkey, checked, disabled }) => (
      <button
        key={label}
        type="button"
        role="menuitemcheckbox"
        aria-checked={!!checked}
        disabled={disabled}
        className={clsx(
          "flex h-[22px] w-full items-center pr-[14px]",
          disabled && "text-[#808080] [text-shadow:1px_1px_0_#fff]"
        )}
      >
        <span
          className={clsx(
            "flex size-[22px] shrink-0 items-center justify-center",
            checked && "border border-t-[#808080] border-l-[#808080] border-r-white border-b-white"
          )}
        >
          {checked && (
            <svg viewBox="0 0 9 9" className="size-[9px]" fill="none" stroke="currentColor" aria-hidden="true">
              <path d="M1 4l2.500 3L8 1.500" strokeWidth="2.200" />
            </svg>
          )}
        </span>
        <Icon name={icon} className="ml-[7px] size-4" />
        <span className="ml-[7px] grow text-left whitespace-nowrap">
          <AccessLabel text={label} />
        </span>
        {hotkey && <span className="w-2 text-center">{hotkey}</span>}
      </button>
    ))}
    <MenuRule className="mr-[11px] ml-[10px]" />
    <button type="button" role="menuitem" className="flex h-[22px] w-full items-center pl-[52px]">
      Reset Toolbar
    </button>
  </div>
);

const SideGrip = () => (
  <div className="mt-[2px] h-[3px] w-7 shrink-0 border border-t-white border-r-[#808080] border-b-[#808080] border-l-white" />
);

const SnapToolbar = () => (
  <aside className="flex w-[34px] shrink-0 flex-col">
    <div className="flex h-[97px] flex-col items-center border-t border-b border-l border-t-white border-b-[#808080] border-l-white">
      <SideGrip />
      <button type="button" aria-label="Selection filter" className="mt-1 border-2 border-[#e03040] bg-[#e0dcd4]">
        <svg viewBox="0 0 20 20" className="size-5" fill="none" aria-hidden="true">
          <path d="M1 8h14M8 1v14" stroke="#111" strokeWidth="1.300" />
          <circle cx="8" cy="8" r="4" stroke="#e02030" strokeWidth="1.500" />
          <path d="M9 9h11l-4 5v5l-3-1v-4z" fill="#f8e020" stroke="#b88c10" />
        </svg>
      </button>
      <span className="mt-[3px]"><LeftCaret /></span>
      <div className="mt-[6px] h-[2px] w-7 border-t border-b border-t-[#808080] border-b-white" />
      <button type="button" aria-label="Work part" className="mt-[6px]">
        <svg viewBox="0 0 24 24" className="size-6" fill="#8a8880" aria-hidden="true">
          <path d="M1 3c3-4 8-3 10-2 5 0 5 6 2 8-3 0-3-3-6-3-1 3-6 4-6-3z" />
          <path d="M13 8h5v5h-5zM17 13h6v9h-8v-5h2z" />
          <path d="M15 15v7M18 17h5" stroke="#c8c6be" />
        </svg>
      </button>
      <span className="mt-[7px] mr-auto ml-[5px]"><LeftCaret /></span>
    </div>
    <div className="flex h-[238px] flex-col items-center border-t border-b border-l border-t-white border-b-[#808080] border-l-white">
      <SideGrip />
      <div className="mt-[2px] flex flex-col">
        {SNAP_POINTS.map(({ name, art }) => (
          <button key={name} type="button" aria-label={name} className="flex h-[31px] w-[31px] items-center justify-center">
            <svg viewBox="0 0 24 24" className="size-[22px]" fill="none" stroke="#857b72" strokeWidth="1.500" aria-hidden="true">
              {art}
            </svg>
          </button>
        ))}
      </div>
      <span className="mt-[2px] mr-auto ml-[5px]"><LeftCaret /></span>
    </div>
  </aside>
);

const ResourceBar = () => (
  <aside className="flex w-[36px] shrink-0 border-l-2 border-white bg-[#d4d0c8]">
    <div className="w-2 shrink-0" />
    <div className="flex grow flex-col gap-3 border-l border-[#404040] bg-[#808080] pt-[15px]">
      {RESOURCES.map((group, i) => (
        <div key={i} className="flex flex-col">
          {group.map(({ name, art }) => (
            <button
              key={name}
              type="button"
              aria-label={name}
              className="flex h-[42px] items-center justify-center border-t border-b border-t-white border-b-[#404040] bg-[#d4d0c8]"
            >
              <svg viewBox="0 0 24 24" className="size-6" aria-hidden="true">
                {art}
              </svg>
            </button>
          ))}
        </div>
      ))}
    </div>
  </aside>
);

const App = () => {
  return (
    <div className="relative flex min-h-screen flex-col overflow-hidden bg-[#d4d0c8] font-['DejaVu_Sans_Condensed','Noto_Sans',sans-serif] text-[11px] leading-[15px] text-black">
      <Gradients />

      <header className="flex h-[18px] items-center justify-between bg-linear-to-r from-[#0a246a] to-[#a6caf0] pl-[2px]">
        <h1 className="flex items-center font-bold whitespace-nowrap text-white">
          <Icon name="nx" className="size-4" />
          <span>NX 4 - Modeling - [1234.prt (Modified) ]</span>
        </h1>
        <WindowButtons gap />
      </header>

      <nav className="flex h-[26px] items-center border-t border-b border-t-white border-b-[#808080] pl-[3px]">
        <div className="h-5 w-[3px] border border-t-white border-r-[#808080] border-b-[#808080] border-l-white" />
        <Icon name="part" className="ml-px size-4" />
        <div className="ml-[6px] flex grow gap-3">
          {MENUS.map((menu) => (
            <button key={menu} type="button">
              <AccessLabel text={menu} />
            </button>
          ))}
        </div>
        <WindowButtons />
      </nav>

      <div className="flex">
        <ToolGroup items={STANDARD}>
          <button type="button" className="flex h-[30px] w-[67px] shrink-0 items-center gap-1 pl-[2px]">
            <Icon name="nx" />
            <span>Start</span>
            <DownCaret />
          </button>
        </ToolGroup>
        <ToolGroup items={VIEW} />
        <ToolGroup items={UTILITY} />
        <ToolGroup items={["ruler", "angle", "more"]} />
      </div>
      <div className="flex">
        <ToolGroup items={FORM_FEATURE} />
        <ToolGroup items={OPERATION} />
        <ToolGroup items={CURVE} />
        <ToolGroup items={SURFACE} />
      </div>

      <div className="mt-px flex h-[22px] border-t border-b border-t-[#808080] border-b-white font-bold">
        <p className="grow border-r border-r-white pt-px pl-[2px]">Select objects and use MB3, or double-click an object</p>
        <div className="w-5 border-r border-l border-l-[#808080] border-r-white" />
        <div className="w-[30px] border-l border-l-[#808080]" />
      </div>

      <main className="flex grow">
        <SnapToolbar />
        <section
          aria-label="Graphics window"
          className="grow border-t-2 border-l-2 border-[#505050] bg-linear-to-b from-[#94bddd] to-[#e5e5e5] to-78%"
        />
        <ResourceBar />
      </main>

      <svg
        viewBox="0 0 370 330"
        className="absolute top-[253px] left-[180px] h-[330px] w-[370px]"
        fill="none"
        stroke="#f00808"
        strokeWidth="2.600"
        aria-hidden="true"
      >
        <path d="M3 326L365 6M315 21l50-16-22 57" />
      </svg>

      <button
        type="button"
        className={clsx(popup, "top-[113px] left-[302px] flex h-[23px] w-[132px] items-center justify-between pr-[2px] pl-[5px] whitespace-nowrap")}
      >
        Add or Remove Buttons
        <DownCaret />
      </button>
      <ToolbarMenu />
      <FeatureMenu />
    </div>
  );
};

export default App;
